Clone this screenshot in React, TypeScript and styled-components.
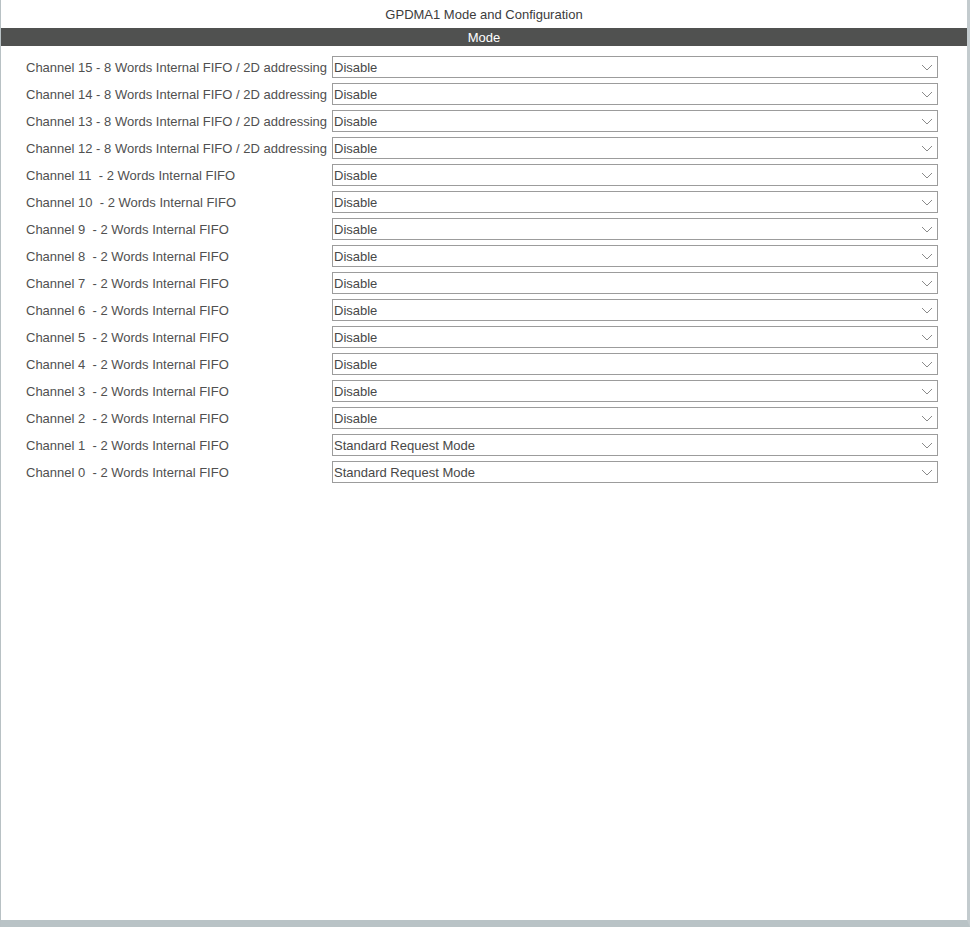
import styled, { createGlobalStyle } from "styled-components";

const GlobalStyle = createGlobalStyle`
  html, body {
    margin: 0;
    padding: 0;
    background: #ffffff;
  }
  body {
    font-family: "Liberation Sans", Arial, sans-serif;
  }
`;

const Frame = styled.div`
  display: flex;
  flex-direction: column;
  width: 970px;
  height: 927px;
  box-sizing: border-box;
  border-left: 1px solid #b8c1c4;
  border-right: 3px solid #c3cbce;
  border-bottom: 7px solid #b9c3c6;
  background: #ffffff;
`;

const Title = styled.div`
  height: 28px;
  line-height: 29px;
  text-align: center;
  font-size: 13px;
  color: #3c3c3c;
`;

const SectionBar = styled.div`
  height: 18px;
  line-height: 19px;
  background: #505150;
  color: #ffffff;
  text-align: center;
  font-size: 13px;
`;

const List = styled.div`
  display: flex;
  flex-direction: column;
  gap: 5px;
  padding: 10px 29px 0 25px;
`;

const Row = styled.div`
  display: flex;
  align-items: center;
  height: 22px;
`;

const Label = styled.div`
  flex: 0 0 auto;
  min-width: 304px;
  padding-right: 2px;
  padding-top: 1px;
  white-space: pre;
  font-size: 13px;
  color: #505050;
`;

const Select = styled.div`
  flex: 1;
  display: flex;
  align-items: center;
  justify-content: space-between;
  height: 22px;
  box-sizing: border-box;
  border: 1px solid #9c9c9c;
  background: #ffffff;
  padding: 1px 4px 0 1px;
  font-size: 13px;
  color: #484848;
`;

const Chevron = () => (
  <svg width="12" height="7" viewBox="0 0 12 7">
    <path d="M1 1 L6 6 L11 1" fill="none" stroke="#8a8a8a" strokeWidth="1" />
  </svg>
);

const channels = [
  ...[15, 14, 13, 12].map((n) => ({
    label: `Channel ${n} - 8 Words Internal FIFO / 2D addressing`,
    value: "Disable",
  })),
  ...[11, 10, 9, 8, 7, 6, 5, 4, 3, 2, 1, 0].map((n) => ({
    label: `Channel ${n}  - 2 Words Internal FIFO`,
    value: n <= 1 ? "Standard Request Mode" : "Disable",
  })),
];

export default function App() {
  return (
    <>
      <GlobalStyle />
      <Frame>
        <Title>GPDMA1 Mode and Configuration</Title>
        <SectionBar>Mode</SectionBar>
        <List>
          {channels.map((c) => (
            <Row key={c.label}>
              <Label>{c.label}</Label>
              <Select>
                <span>{c.value}</span>
                <Chevron />
              </Select>
            </Row>
          ))}
        </List>
      </Frame>
    </>
  );
}
